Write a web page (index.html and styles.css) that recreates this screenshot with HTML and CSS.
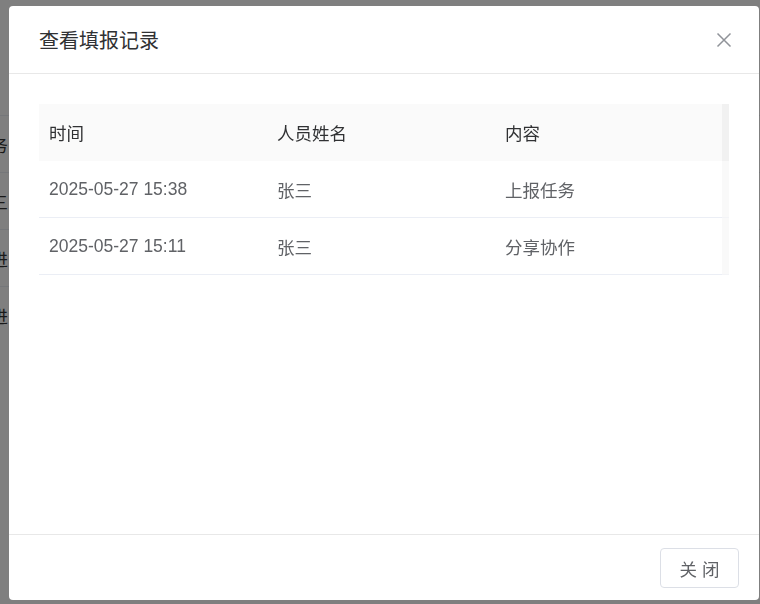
FILE: index.html
```html
<!DOCTYPE html>
<html lang="zh-CN">
<head>
<meta charset="utf-8">
<title>查看填报记录</title>
<link rel="stylesheet" href="styles.css">
</head>
<body>
  <div class="page">
    <div class="bg-table">
      <div class="bg-row">任务</div>
      <div class="bg-row">张三</div>
      <div class="bg-row">推进</div>
      <div class="bg-row">推进</div>
    </div>
  </div>

  <div class="mask"></div>

  <div class="dialog">
    <div class="dlg-header">
      <span class="dlg-title">查看填报记录</span>
      <svg class="dlg-close" width="16" height="16" viewBox="0 0 16 16">
        <path d="M1.5 1.5 L14.5 14.5 M14.5 1.5 L1.5 14.5" stroke="#909399" stroke-width="1.5" fill="none"/>
      </svg>
    </div>

    <div class="dlg-body">
      <div class="tbl-wrap">
        <div class="tbl">
          <div class="tr th">
            <div class="td">时间</div>
            <div class="td">人员姓名</div>
            <div class="td">内容</div>
          </div>
          <div class="tr">
            <div class="td">2025-05-27 15:38</div>
            <div class="td">张三</div>
            <div class="td">上报任务</div>
          </div>
          <div class="tr">
            <div class="td">2025-05-27 15:11</div>
            <div class="td">张三</div>
            <div class="td">分享协作</div>
          </div>
        </div>
        <div class="gutter">
          <div class="gutter-head"></div>
          <div class="gutter-row"></div>
          <div class="gutter-row"></div>
        </div>
      </div>
    </div>

    <div class="dlg-footer">
      <button class="btn">关 闭</button>
    </div>
  </div>
</body>
</html>
```

FILE: styles.css
```css
html, body {
  margin: 0;
  padding: 0;
}

body {
  width: 760px;
  height: 604px;
  overflow: hidden;
  position: relative;
  background: #fff;
  font-family: "Liberation Sans", "Noto Sans CJK SC", sans-serif;
}

/* underlying list page */
.page {
  height: 100%;
}

.bg-table {
  padding-top: 115px;
}

.bg-row {
  height: 56px;
  border-top: 1px solid #ebeef5;
  display: flex;
  align-items: center;
  margin-left: -27px;
  font-size: 17.5px;
  color: #333;
}

/* modal backdrop */
.mask {
  position: fixed;
  inset: 0;
  background: rgba(0, 0, 0, 0.5);
}

.dialog {
  position: absolute;
  left: 9px;
  top: 6px;
  width: 750px;
  height: 594px;
  background: #fff;
  border-radius: 4px;
  display: flex;
  flex-direction: column;
}

.dlg-header {
  height: 67px;
  flex: none;
  border-bottom: 1px solid #e8e8e8;
  display: flex;
  align-items: center;
  justify-content: space-between;
  padding: 0 27px 0 30px;
}

.dlg-title {
  font-size: 20px;
  color: #303133;
}

.dlg-close {
  display: block;
}

.dlg-body {
  flex: 1;
  padding: 30px 30px 0;
}

.tbl-wrap {
  display: flex;
  width: 690px;
}

.tbl {
  width: 683px;
}

.tr {
  display: grid;
  grid-template-columns: 228px 228px 227px;
  height: 57px;
  box-sizing: border-box;
  border-bottom: 1px solid #ebeef5;
  font-size: 17.5px;
  color: #606266;
}

.tr.th {
  background: #fafafa;
  border-bottom: none;
  color: #303133;
}

.td {
  display: flex;
  align-items: center;
  padding-left: 10px;
  white-space: nowrap;
}

.gutter {
  width: 7px;
}

.gutter-head {
  height: 57px;
  background: #f1f1f1;
}

.gutter-row {
  height: 57px;
  box-sizing: border-box;
  background: #f9f9f9;
  border-bottom: 1px solid #f3f4f7;
}

.dlg-footer {
  height: 65px;
  flex: none;
  border-top: 1px solid #e8e8e8;
  display: flex;
  align-items: center;
  justify-content: flex-end;
  padding-right: 20px;
}

.btn {
  width: 79px;
  height: 40px;
  border: 1px solid #dcdfe6;
  border-radius: 4px;
  background: #fff;
  color: #606266;
  font-family: inherit;
  font-size: 17.5px;
  padding: 0;
  margin-top: 1px;
}
```
